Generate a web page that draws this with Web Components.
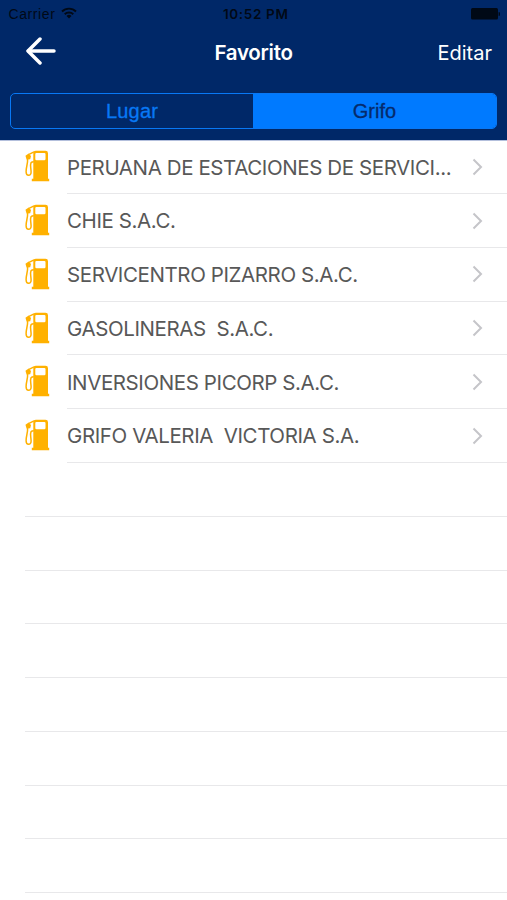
<!DOCTYPE html>
<html lang="es">
<head>
<meta charset="utf-8">
<title>Favorito</title>
<style>
html,body{margin:0;height:900px;overflow:hidden;background:#fff;font-family:Inter,"Liberation Sans",sans-serif}
</style>
</head>
<body>
<favorites-screen></favorites-screen>
<script>
const define = (name, html, setup) => customElements.define(name, class extends HTMLElement {
  connectedCallback() {
    if (this.shadowRoot) return;
    const root = this.attachShadow({mode: 'open'});
    root.innerHTML = html;
    if (setup) setup(this, root);
  }
});

define('status-bar', `
<style>
:host{display:grid;grid-template-columns:1fr auto 1fr;align-items:center;height:27px;box-sizing:border-box;padding:0 7px 0 8.5px;color:#000916;font-size:13px}
.left{display:flex;align-items:center;gap:6px}
.carrier{font:14px "Liberation Sans",sans-serif;letter-spacing:.6px}
.time{font-weight:600;font-size:13.5px;letter-spacing:.65px;padding-left:3px}
.battery{justify-self:end}
svg{display:block}
.left svg{margin-top:-2px}
</style>
<div class="left"><span class="carrier">Carrier</span>
<svg width="16" height="12" viewBox="0 0 16 12"><g fill="none" stroke="currentColor" stroke-width="1.9"><path d="M1 4.5a10 10 0 0 1 14 0"/><path d="M3.7 7.2a6.2 6.2 0 0 1 8.6 0"/></g><path d="M5.5 9a3.6 3.6 0 0 1 5 0L8 11.5z" fill="currentColor"/></svg></div>
<span class="time">10:52 PM</span>
<svg class="battery" width="29" height="12" viewBox="0 0 29 12" fill="currentColor"><rect width="27" height="11.5" rx="1.5"/><path d="M27.6 4a2 2 0 0 1 0 4z"/></svg>`);

define('nav-bar', `
<style>
:host{display:grid;grid-template-columns:1fr auto 1fr;align-items:center;height:51px;box-sizing:border-box;padding:0 15px;color:#fff;font-size:20px}
svg{display:block;margin:-4px 0 0 10px}
.title{font-weight:600;font-size:20.5px;letter-spacing:-.28px}
.edit{justify-self:end}
</style>
<svg width="31" height="28" viewBox="0 0 31 28" fill="none" stroke="currentColor" stroke-width="3.5" stroke-linecap="round" stroke-linejoin="round"><path d="M15 2 3 14l12 12"/><path d="M3.5 14H29"/></svg>
<span class="title"><slot></slot></span><span class="edit"><slot name="action"></slot></span>`);

define('segment-control', `
<style>
:host{display:flex;height:36px;box-sizing:border-box;margin:14.5px 10px 0 10.4px;border:1.5px solid #0878f5;border-radius:5px;overflow:hidden;font:20px "Liberation Sans",sans-serif}
span{width:241.4px;display:flex;align-items:center;justify-content:center;padding-top:1px;box-sizing:border-box;color:#0878f5;letter-spacing:.25px;-webkit-text-stroke:.3px currentColor}
.on{flex:1;background:#007aff;color:#052a6b;letter-spacing:0}
</style>
<span><slot name="first"></slot></span><span class="on"><slot name="second"></slot></span>`);

define('pump-icon', `
<style>:host{display:block;width:25px;height:32px}svg{display:block}</style>
<svg width="25" height="32" viewBox="0 0 25 32"><path fill="#ffb100" fill-rule="evenodd" d="M8.3 28.7V3.2Q8.3.8 10.8 .8H20.5Q23 .8 23 3.2V28.7H24.2V31.3H6.8V28.7zM10.3 4V9Q10.3 10.2 11.5 10.2H19.3Q20.5 10.2 20.5 9V4Q20.5 3 19.3 3H11.5Q10.3 3 10.3 4z"/><path fill="#ffb100" d="M.5 5.8 3.6 3.6 6 6 5.2 9.2 1.5 9.6z"/><path fill="none" stroke="#ffb100" stroke-width="1.5" d="M4 4.4 9 1.9M2.6 9C2.9 14 1 17 1.1 21.8 1.1 26.5 6.2 26.5 6.1 22 6 18 4.9 15 6 12.8 6.8 11.8 8 11.8 8.8 11.8"/></svg>`);

define('station-row', `
<style>
:host{display:flex;height:53.77px;box-sizing:border-box;padding-left:25px;color:#585858;font-size:20.5px}
:host([empty]) .name,:host([empty]) svg{display:none}
pump-icon{flex:none;margin:10px 17px 0 0}
.body{flex:1;min-width:0;display:flex;align-items:center;border-bottom:1.3px solid #e8e8ea;padding-right:24px}
.name{flex:1;min-width:0;white-space:pre;letter-spacing:-.4px;padding-top:.6px}
svg{flex:none}
</style>
<pump-icon></pump-icon><div class="body"><span class="name"><slot></slot></span>
<svg width="11" height="18" viewBox="0 0 11 18" fill="none" stroke="#c5c5c9" stroke-width="2"><path d="M1.5 1.5 9 9l-7.5 7.5"/></svg></div>`,
(host, root) => { if (host.hasAttribute('empty')) root.querySelector('pump-icon').remove(); });

define('favorites-screen', `
<style>
:host{display:block;height:900px;overflow:hidden;background:#fff}
header{height:140px;background:#002868;overflow:hidden;box-shadow:0 1px #b3bfdc}
main{padding-top:.4px}
</style>
<header><status-bar></status-bar><nav-bar>Favorito<span slot="action">Editar</span></nav-bar>
<segment-control><span slot="first">Lugar</span><span slot="second">Grifo</span></segment-control></header>
<main>
<station-row>PERUANA DE ESTACIONES DE SERVICI...</station-row>
<station-row>CHIE S.A.C.</station-row>
<station-row>SERVICENTRO PIZARRO S.A.C.</station-row>
<station-row>GASOLINERAS  S.A.C.</station-row>
<station-row>INVERSIONES PICORP S.A.C.</station-row>
<station-row>GRIFO VALERIA  VICTORIA S.A.</station-row>
${'<station-row empty></station-row>'.repeat(9)}
</main>`);
</script>
</body>
</html>
